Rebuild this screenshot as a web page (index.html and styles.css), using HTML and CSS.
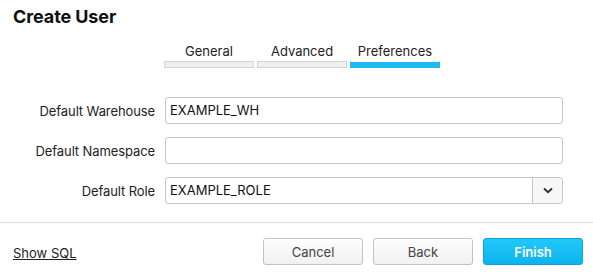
FILE: index.html
```html
<!DOCTYPE html>
<html lang="en">
<head>
  <meta charset="UTF-8" />
  <title>Create User</title>
  <link rel="stylesheet" href="styles.css">
</head>
<body>

  <!-- === HEADER === -->
  <h1 class="title">Create User</h1>

  <!-- === TABS === -->
  <div class="tabs">
    <div class="tab">
      <span class="tab-label">General</span>
      <span class="tab-bar"></span>
    </div>
    <div class="tab">
      <span class="tab-label">Advanced</span>
      <span class="tab-bar"></span>
    </div>
    <div class="tab active">
      <span class="tab-label">Preferences</span>
      <span class="tab-bar"></span>
    </div>
  </div>

  <!-- === FORM === -->
  <div class="form">
    <div class="row">
      <label class="label">Default Warehouse</label>
      <div class="field">EXAMPLE_WH</div>
    </div>
    <div class="row">
      <label class="label">Default Namespace</label>
      <div class="field"></div>
    </div>
    <div class="row">
      <label class="label">Default Role</label>
      <div class="field select">
        <span class="select-value">EXAMPLE_ROLE</span>
        <span class="select-btn">
          <svg width="10" height="7" viewBox="0 0 10 7"><path d="M1 1.5 L5 5.2 L9 1.5" fill="none" stroke="#333" stroke-width="2"/></svg>
        </span>
      </div>
    </div>
  </div>

  <!-- === FOOTER === -->
  <div class="footer">
    <a class="show-sql" href="#">Show SQL</a>
    <div class="buttons">
      <button class="btn">Cancel</button>
      <button class="btn">Back</button>
      <button class="btn primary">Finish</button>
    </div>
  </div>

</body>
</html>
```

FILE: styles.css
```css
* {
  margin: 0;
  padding: 0;
  box-sizing: border-box;
}

body {
  width: 593px;
  height: 280px;
  background: white;
  color: #222;
  font-family: Inter, "Noto Sans", sans-serif;
  font-size: 13px;
  overflow: hidden;
}

.title {
  font-size: 18px;
  font-weight: 700;
  line-height: 22px;
  color: #111;
  padding: 6px 0 0 13px;
  letter-spacing: -0.1px;
}

.tabs {
  display: flex;
  gap: 3px;
  margin: 15px 0 0 164px;
}

.tab {
  width: 90px;
  display: flex;
  flex-direction: column;
  align-items: center;
}

.tab-label {
  line-height: 16px;
  color: #222;
}

.tab-bar {
  display: block;
  width: 100%;
  height: 7px;
  margin-top: 2px;
  background: #efefef;
  border: 1px solid #d4d4d4;
}

.tab.active .tab-bar {
  background: #1ebaf0;
  border-color: #1ebaf0;
  border-top-color: white;
}

.form {
  margin-top: 29px;
  display: flex;
  flex-direction: column;
  gap: 13px;
}

.row {
  display: flex;
  align-items: center;
  gap: 10px;
}

.label {
  width: 155px;
  text-align: right;
  color: #222;
  letter-spacing: -0.1px;
}

.field {
  width: 398px;
  height: 27px;
  border: 1px solid #c6c6c6;
  border-radius: 3px;
  padding: 0 4px;
  line-height: 25px;
  color: #111;
}

.select {
  display: flex;
  padding-right: 0;
}

.select-value {
  flex: 1;
}

.select-btn {
  width: 30px;
  border-left: 1px solid #c6c6c6;
  background: #f7f7f7;
  border-radius: 0 3px 3px 0;
  display: flex;
  align-items: center;
  justify-content: center;
}

.footer {
  margin-top: 18px;
  border-top: 1px solid #dcdcdc;
  display: flex;
  justify-content: space-between;
  align-items: center;
  padding: 15px 10px 0 13px;
}

.show-sql {
  color: #222;
  text-decoration: underline;
  margin-top: 3px;
}

.buttons {
  display: flex;
  gap: 10px;
}

.btn {
  width: 100px;
  height: 27px;
  font-family: inherit;
  font-size: 13px;
  color: #444;
  background: linear-gradient(#fdfdfd, #f1f1f1);
  border: 1px solid #c4c4c4;
  border-radius: 3px;
}

.btn.primary {
  color: white;
  font-weight: 600;
  background: linear-gradient(#20c8fa, #0cb4ee);
  border-color: #0ea2d8;
}
```
